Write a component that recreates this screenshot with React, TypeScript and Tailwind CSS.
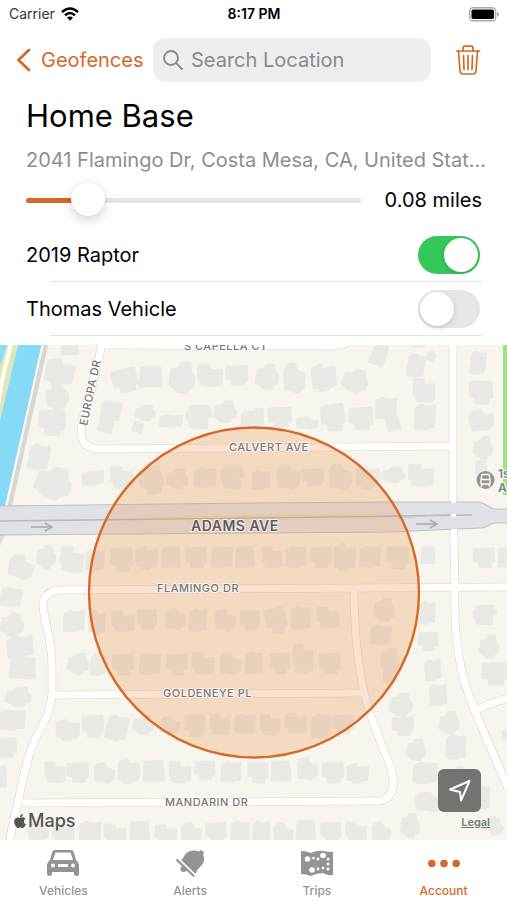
import React, { useState } from "react";
import { FaApple } from "react-icons/fa";

// Geofence detail screen: search bar, radius slider, vehicle toggles, map and tab bar

type Vehicle = {
  id: string;
  name: string;
  enabled: boolean;
};

const MOCK_VEHICLES: Vehicle[] = [
  { id: "v1", name: "2019 Raptor", enabled: true },
  { id: "v2", name: "Thomas Vehicle", enabled: false },
];

// house footprints, drawn in a 24x24 box around 0,0
const SHAPES = [
  "M-11-8L-2-11L0-6L11-7L10 8L3 9L2 11L-5 11L-6 8L-11 8Z",
  "M-11-10L-1-10L-1-4L11-5L11 9L4 11L-8 10L-8 4L-11 4Z",
  "M-9-6L-3-7L0-11L7-11L8-4L11-1L10 6L6 7L4 11L-4 10L-7 7L-11 5Z",
  "M-11-9L10-10L11 5L7 6L7 11L-5 11L-5 5L-11 4Z",
  "M-10-8L-4-11L2-9L11-10L10 9L3 9L2 11L-11 10Z",
  "M-10-5L-7-10L0-11L3-5L11-3L10 7L4 11L-3 9L-9 9Z",
  "M-10-10L9-11L11 10L-11 11Z",
];

// [x, y, width, height, shape, rotation]
const HOUSES: [number, number, number, number, number, number?][] = [
  [70, 350, 18, 11, 6], [60, 372, 29, 27, 0, 10], [57, 397, 24, 27, 2, -15], [52, 422, 27, 27, 3, 5],
  [39, 457, 21, 26, 4, 8], [53, 483, 37, 33, 2, 12],
  [125, 380, 26, 25, 3, -12], [151, 377, 24, 21, 6, 3], [182, 378, 27, 32, 2], [210, 375, 25, 24, 1], [237, 375, 23, 21, 3],
  [267, 377, 24, 26, 2], [294, 378, 23, 31, 5], [324, 377, 25, 28, 0, -8], [355, 381, 27, 24, 2, 12],
  [379, 355, 16, 22, 6, 22], [416, 366, 18, 24, 4, 8], [431, 356, 10, 11, 2], [417, 345, 12, 5, 6], [424, 390, 22, 25, 1], [425, 417, 22, 26, 4],
  [111, 411, 21, 22, 4, 8], [106, 427, 15, 12, 6, 18], [145, 413, 22, 16, 2], [138, 427, 11, 11, 6, 20], [171, 421, 24, 13, 4],
  [199, 417, 24, 27, 0, 90], [225, 412, 24, 22, 2], [248, 418, 14, 15, 4], [259, 417, 10, 18, 6], [280, 417, 24, 22, 3],
  [307, 423, 24, 13, 5], [333, 417, 24, 28, 3, -5], [361, 418, 25, 24, 3], [386, 408, 22, 22, 4], [393, 423, 14, 16, 6, -12],
  [478, 363, 16, 24, 4, 6], [481, 392, 24, 25, 3, 2], [481, 420, 26, 23, 5, -10], [483, 448, 20, 23, 2], [481, 467, 12, 14, 6],
  [93, 478, 23, 15, 4, -6], [122, 477, 23, 24, 1], [151, 480, 24, 29, 3, -12], [177, 479, 23, 20, 2], [205, 478, 23, 20, 4],
  [233, 477, 25, 24, 0, 90], [261, 480, 19, 20, 4], [288, 477, 25, 26, 5], [313, 477, 23, 18, 3], [340, 477, 25, 27, 5],
  [368, 477, 24, 24, 0], [393, 475, 25, 16, 2], [421, 475, 25, 24, 1],
  [21, 567, 27, 24, 5, 12], [46, 557, 20, 24, 2], [72, 559, 24, 27, 1, 8], [95, 560, 20, 22, 4], [122, 559, 23, 25, 3],
  [147, 558, 23, 24, 0], [171, 557, 20, 22, 6, 3], [196, 557, 22, 22, 3], [222, 557, 22, 22, 4], [245, 557, 20, 22, 6],
  [272, 557, 20, 23, 1], [296, 557, 21, 22, 4], [321, 557, 22, 22, 3], [345, 557, 22, 28, 0], [370, 557, 22, 22, 4],
  [398, 557, 23, 24, 3], [428, 555, 15, 18, 6], [484, 557, 22, 21, 3], [505, 557, 14, 20, 6],
  [11, 597, 22, 20, 4, 8], [12, 625, 24, 24, 2], [20, 647, 27, 22, 4, -8], [23, 668, 27, 22, 6, 4],
  [74, 621, 22, 22, 4], [97, 622, 17, 26, 0], [123, 621, 23, 22, 1], [147, 619, 20, 22, 3], [175, 619, 22, 22, 5],
  [198, 620, 18, 24, 4], [225, 620, 22, 22, 5], [250, 620, 20, 22, 3], [276, 620, 21, 27, 3, -10], [301, 618, 21, 24, 4], [328, 617, 22, 22, 1],
  [384, 610, 22, 24, 2], [381, 635, 22, 20, 4], [390, 660, 20, 24, 2], [427, 613, 17, 23, 4], [428, 641, 20, 20, 3],
  [433, 670, 17, 22, 4, -8], [485, 615, 20, 24, 0, 90], [489, 647, 20, 24, 2], [495, 673, 26, 24, 3],
  [78, 664, 22, 22, 2], [98, 665, 16, 22, 4], [123, 664, 22, 22, 3], [150, 664, 22, 22, 4], [177, 664, 21, 22, 3],
  [203, 663, 22, 23, 1], [230, 664, 22, 22, 5], [254, 663, 18, 22, 4], [280, 663, 20, 22, 3], [303, 658, 20, 30, 1], [330, 663, 22, 22, 3],
  [18, 697, 27, 20, 2], [12, 720, 27, 21, 4], [6, 747, 22, 21, 3], [2, 777, 10, 22, 6],
  [68, 730, 24, 21, 0], [93, 726, 22, 24, 3], [117, 728, 22, 26, 4, 10], [143, 725, 22, 20, 2], [170, 725, 20, 18, 5],
  [195, 725, 21, 24, 3], [220, 724, 20, 22, 1], [245, 724, 22, 20, 4], [270, 724, 20, 22, 1], [296, 723, 22, 21, 1], [321, 726, 21, 25, 4], [343, 724, 22, 20, 3],
  [55, 772, 21, 22, 1], [78, 772, 22, 21, 3], [104, 773, 22, 21, 5], [129, 771, 22, 25, 0], [154, 771, 22, 22, 6],
  [180, 772, 22, 23, 1], [205, 770, 21, 20, 3], [231, 772, 21, 21, 4], [258, 772, 21, 22, 3], [281, 771, 21, 21, 6],
  [307, 769, 22, 23, 5], [333, 772, 22, 22, 3], [358, 773, 22, 20, 0],
  [38, 832, 22, 18, 5], [63, 832, 22, 20, 1], [90, 832, 22, 22, 4], [115, 833, 22, 20, 1], [140, 832, 20, 22, 6], [166, 833, 22, 18, 1],
  [191, 833, 22, 22, 5], [216, 832, 21, 21, 3], [240, 832, 20, 22, 4], [261, 832, 18, 22, 4], [283, 833, 21, 20, 5],
  [306, 831, 20, 23, 6], [331, 832, 21, 22, 3], [356, 832, 21, 22, 1], [381, 832, 20, 20, 5], [410, 826, 20, 25, 2],
  [391, 672, 16, 22, 4], [401, 705, 24, 24, 2], [403, 726, 22, 20, 3], [416, 750, 20, 22, 2], [425, 773, 25, 22, 4],
  [429, 802, 30, 20, 5], [438, 695, 18, 22, 4, -6], [449, 723, 21, 23, 2], [456, 747, 21, 25, 4], [462, 772, 14, 12, 5],
  [485, 798, 10, 24, 4], [495, 826, 18, 18, 5, 30], [505, 735, 6, 10, 6],
];

const ROADS = [
  "M102 340C99 372 81 415 81 430C81 442 86 448 98 449L453 446",
  "M101 345L334 346Q342 346 347 342",
  "M453 340V500L455 587C454 622 457 650 461 667C467 697 479 720 486 737L508 788",
  "M476 710Q490 703 509 698",
  "M509 587L60 590C48 591 42 597 43 608C45 622 52 640 52 667V693C51 716 40 726 32 747C20 780 21 797 13 822L9 845",
  "M354 588C354 635 358 668 366 700C373 725 381 743 388 760C398 783 393 801 377 801L22 803",
  "M53 695L364 693",
];

function MapView() {
  return (
    <svg
      viewBox="0 345 507 495"
      preserveAspectRatio="xMidYMid slice"
      className="absolute inset-0 h-full w-full"
      fontFamily='Inter, "Liberation Sans", sans-serif'
      role="img"
      aria-label="Geofence map"
    >
      <rect x="-200" y="145" width="907" height="895" fill="#f7f5ed" />

      {/* canal and path on the left, park on the right */}
      <path d="M0 345H18L0 420Z" fill="#e2e7b8" />
      <path d="M0 345H7L0 366Z" fill="#8bdcf5" />
      <path d="M11 343L1 385L-3 412" fill="none" stroke="#fff" strokeWidth="4" />
      <path d="M18 345H42L5 506H0V420Z" fill="#87daf5" />
      <path d="M46 343L9 508" fill="none" stroke="#d8d7d1" strokeWidth="5" />
      <path d="M43 343L6 508" fill="none" stroke="#fbfaf6" strokeWidth="2" />
      <path d="M0 535H5L0 546Z" fill="#dedfdc" />
      <path d="M503 345H507V495H503Z" fill="#a2e37f" />

      <g fill="#e9e9e5" stroke="#e9e9e5" strokeWidth="3.500" strokeLinejoin="round">
        {HOUSES.map(([x, y, w, h, shape, rot = 0], i) => (
          <path key={i} d={SHAPES[shape]} transform={`translate(${x} ${y}) rotate(${rot}) scale(${w / 25} ${h / 25})`} />
        ))}
      </g>

      <g fill="none" stroke="#e0dfda" strokeWidth="8.500">
        {ROADS.map((d) => <path key={d} d={d} />)}
      </g>
      <g fill="none" stroke="#fff" strokeWidth="7">
        {ROADS.map((d) => <path key={d} d={d} />)}
      </g>

      {/* Adams Ave */}
      <path
        d="M-2 506L253 503L390 502H478C487 503 488 508 494 509H510V523H494C488 524 488 528 480 528L390 532L253 533L-2 535Z"
        fill="#e0e2e8"
        stroke="#bfc1c5"
        strokeWidth="1.2"
      />
      <path d="M-2 521L253 518L400 516L472 515" fill="none" stroke="#b9b9bd" strokeWidth="1.6" />
      <path d="M150 518L253 516L376 515" fill="none" stroke="#dfdfa8" strokeWidth="1.4" />
      <path d="M398 518L450 514" fill="none" stroke="#c6c7cb" strokeWidth="1" />
      <path d="M451 500H456V503H451ZM451 514H456V517H451ZM451 529H457V533H451Z" fill="#fff" />
      <g fill="none" stroke="#a9abb0" strokeWidth="1.6">
        <path d="M31 527H51M45 523L52 527L45 531" />
        <path d="M416 524H436M430 520L437 524L430 528" />
      </g>

      <circle cx="254" cy="592.5" r="165" fill="#ef8a45" fillOpacity="0.25" stroke="#d66a26" strokeWidth="2.4" />

      <g fontSize="11" fontWeight="500" fill="#77777a" stroke="#fff" strokeOpacity="0.7" strokeWidth="2" paintOrder="stroke" letterSpacing="0.5">
        <text x="184" y="350">S CAPELLA CT</text>
        <text x="229" y="451">CALVERT AVE</text>
        <text x="157" y="592">FLAMINGO DR</text>
        <text x="163" y="697">GOLDENEYE PL</text>
        <text x="165" y="806">MANDARIN DR</text>
        <text transform="translate(87 426) rotate(-78)">EUROPA DR</text>
      </g>
      <text x="191" y="531" fontSize="14" fontWeight="600" fill="#5d5c60" stroke="#fff" strokeOpacity="0.7" strokeWidth="2" paintOrder="stroke" letterSpacing="0.5">
        ADAMS AVE
      </text>

      <circle cx="485.500" cy="480" r="9" fill="#949494" />
      <path d="M482 474.500H489L490 479V484H481V479ZM481 479.500H490M482.500 484L481 487M488.500 484L490 487" fill="none" stroke="#fff" strokeWidth="1.3" />
      <g fontSize="12" fontWeight="600" fill="#7c7c7c" stroke="#fff" strokeWidth="2" paintOrder="stroke">
        <text x="498" y="478">1s</text>
        <text x="498" y="492">A</text>
      </g>
    </svg>
  );
}

const TABS = [
  {
    name: "Vehicles",
    icon: (
      <svg viewBox="0 0 32 28" className="h-7 w-8" fill="currentColor">
        <path
          fillRule="evenodd"
          d="M8 1H24Q26 1 26.700 3L29 11Q32 13 32 16V25Q32 27 29.500 27Q27 27 27 25V23H5V25Q5 27 2.500 27Q0 27 0 25V16Q0 13 3 11L5.300 3Q6 1 8 1ZM8.500 3.500L6 11H26L23.500 3.500ZM6 14.500A2 2 0 1 0 6 18.500A2 2 0 1 0 6 14.500ZM26 14.500A2 2 0 1 0 26 18.500A2 2 0 1 0 26 14.500ZM11 15V18H21V15Z"
        />
      </svg>
    ),
  },
  {
    name: "Alerts",
    icon: (
      <svg viewBox="0 0 32 28" className="h-7 w-8" fill="currentColor">
        <path d="M7 11.500C9 9.500 10 7 12 4.500C15 1.500 20 0.500 25 2.500A2.600 2.600 0 1 1 29 5.800C31 10 30 14 27.500 16.500C25 19 23 20.500 21.500 25Z" />
        <circle cx="9.500" cy="20" r="3" />
        <path d="M4 9.500L21 26" fill="none" stroke="#fff" strokeWidth="2" />
        <path d="M2.500 10.500L20 27.300" fill="none" stroke="currentColor" strokeWidth="2.200" />
      </svg>
    ),
  },
  {
    name: "Trips",
    icon: (
      <svg viewBox="0 0 32 28" className="h-7 w-8">
        <path d="M0 2Q5 2 10 4Q16 1 22 2Q28 3 32 3V26Q27 27 22 24Q16 24 10 27Q5 25 0 25Z" fill="currentColor" />
        <g fill="#fff">
          <circle cx="6.500" cy="10" r="2.800" />
          <circle cx="22" cy="6.500" r="2.800" />
          <circle cx="11" cy="21" r="2.800" />
          <circle cx="12.500" cy="9" r="1.300" />
          <circle cx="17" cy="10" r="1.500" />
          <circle cx="27" cy="10" r="1.500" />
          <circle cx="27" cy="15" r="1.500" />
          <circle cx="27" cy="20" r="1.500" />
          <circle cx="22" cy="19" r="1.400" />
          <circle cx="17" cy="20" r="1.400" />
        </g>
      </svg>
    ),
  },
  {
    name: "Account",
    icon: (
      <svg viewBox="0 0 32 28" className="h-7 w-8" fill="currentColor">
        <circle cx="3.800" cy="14.500" r="3.800" />
        <circle cx="16" cy="14.500" r="3.800" />
        <circle cx="28.200" cy="14.500" r="3.800" />
      </svg>
    ),
  },
];

export default function App() {
  const [query, setQuery] = useState("");
  const [radius, setRadius] = useState(8);
  const [vehicles, setVehicles] = useState(MOCK_VEHICLES);
  const [tab, setTab] = useState("Account");

  const toggle = (id: string) =>
    setVehicles(vehicles.map((v) => (v.id === id ? { ...v, enabled: !v.enabled } : v)));

  return (
    <div className="flex min-h-screen flex-col bg-white font-[Inter,'Liberation_Sans',sans-serif] text-black">
      {/* Status bar */}
      <div className="grid h-7 grid-cols-3 items-center pr-2 pl-[9px] text-sm">
        <div className="flex items-center gap-1.5 text-[#333]">
          Carrier
          <svg viewBox="0 0 18 14" className="h-3.5 w-[18px]" fill="none" stroke="#000" strokeWidth="2.400">
            <path d="M1 5.200Q9-2.200 17 5.200" />
            <path d="M4 8.300Q9 3.800 14 8.300" />
            <path d="M9 13.800L6 10.600Q9 8.400 12 10.600Z" fill="#000" stroke="none" />
          </svg>
        </div>
        <div className="text-center font-semibold">8:17 PM</div>
        <svg viewBox="0 0 30 15" className="h-[15px] w-[30px] justify-self-end">
          <rect x="0.700" y="0.700" width="26" height="13" rx="3.500" fill="#fff" stroke="#aaa" strokeWidth="1.400" />
          <rect x="2.500" y="2.500" width="22.500" height="9.500" rx="1.800" fill="#000" />
          <path d="M28 5Q30 5 30 7.200Q30 9.500 28 9.500Z" fill="#aaa" />
        </svg>
      </div>

      {/* Nav bar */}
      <div className="flex items-center pt-2.5 pr-[26px] pl-4">
        <a href="#geofences" className="flex w-[137px] shrink-0 items-center gap-2.5 text-xl text-[#d4692a]">
          <svg viewBox="0 0 15 24" className="h-6 w-[15px] shrink-0" fill="none" stroke="currentColor" strokeWidth="2.800" strokeLinecap="round" strokeLinejoin="round">
            <path d="M13 2L2.500 12L13 22" />
          </svg>
          Geofences
        </a>
        <label className="flex h-11 min-w-0 flex-1 items-center gap-2 rounded-xl bg-[#eee] px-2.5 text-[#8a8a8e]">
          <svg viewBox="0 0 20 20" className="h-5 w-5 shrink-0" fill="none" stroke="currentColor" strokeWidth="1.900" strokeLinecap="round">
            <circle cx="8" cy="8" r="7" />
            <path d="M13.200 13.200L19 19" />
          </svg>
          <input
            type="text"
            aria-label="Search Location"
            value={query}
            onChange={(e) => setQuery(e.target.value)}
            placeholder="Search Location"
            className="w-full min-w-0 bg-transparent text-xl text-black outline-none placeholder:text-[#8a8a8e]"
          />
        </label>
        <button aria-label="Delete geofence" className="ml-6 shrink-0 text-[#d4692a]">
          <svg viewBox="0 0 26 30" className="h-[30px] w-[26px]" fill="none" stroke="currentColor" strokeWidth="1.700" strokeLinecap="round" strokeLinejoin="round">
            <path d="M1.500 6H24.500" />
            <path d="M8 6V3Q8 1.200 10 1.200H16Q18 1.200 18 3V6" />
            <path d="M3.500 6L5 26Q5.200 29 8 29H18Q20.800 29 21 26L22.500 6" />
            <path d="M8.500 10.500L9 24.500M13 10.500V24.500M17.500 10.500L17 24.500" />
          </svg>
        </button>
      </div>

      <div className="pr-[25px] pl-[26px]">
        <h1 className="mt-3.5 text-[31px] leading-10">Home Base</h1>
        <p className="mt-2.5 text-xl leading-7 whitespace-nowrap text-[#8e8e8e]">
          2041 Flamingo Dr, Costa Mesa, CA, United Stat...
        </p>

        <div className="mt-[9px] flex items-center justify-between gap-6">
          <input
            type="range"
            aria-label="Radius"
            min={0}
            max={53}
            value={radius}
            onChange={(e) => setRadius(Number(e.target.value))}
            style={{ "--fill": `${(radius / 53) * 90 + 5}%` } as React.CSSProperties}
            className="h-[34px] min-w-0 flex-1 appearance-none bg-transparent [&::-webkit-slider-runnable-track]:h-[5px] [&::-webkit-slider-runnable-track]:rounded-full [&::-webkit-slider-runnable-track]:bg-[linear-gradient(to_right,#d4692a_var(--fill),#e5e5e5_var(--fill))] [&::-webkit-slider-thumb]:-mt-4 [&::-webkit-slider-thumb]:size-[34px] [&::-webkit-slider-thumb]:appearance-none [&::-webkit-slider-thumb]:rounded-full [&::-webkit-slider-thumb]:bg-white [&::-webkit-slider-thumb]:shadow-[0_4px_12px_rgba(0,0,0,0.16),0_0_2px_rgba(0,0,0,0.1)]"
          />
          <span className="shrink-0 text-xl">{(radius / 100).toFixed(2)} miles</span>
        </div>

        <ul className="mt-[11px] mb-[9px]">
          {vehicles.map((v) => (
            <li key={v.id}>
              <label className="flex h-[53px] items-center justify-between pr-0.5 text-xl">
                {v.name}
                <input
                  type="checkbox"
                  role="switch"
                  checked={v.enabled}
                  onChange={() => toggle(v.id)}
                  className="h-[38px] w-[62px] appearance-none rounded-full bg-[#e6e6e8] p-0.5 before:block before:size-[34px] before:rounded-full before:bg-white before:shadow-[0_2px_5px_rgba(0,0,0,0.15)] checked:bg-[#35c759] checked:before:ml-6"
                />
              </label>
              <div className="ml-6 h-px bg-[#e4e4e4]" />
            </li>
          ))}
        </ul>
      </div>

      {/* Map */}
      <div className="relative flex flex-1 items-end justify-between overflow-hidden pr-3.5 pl-3">
        <MapView />
        <div className="relative mb-[7px] flex items-center text-lg leading-6 font-medium text-[#555]">
          <FaApple className="size-4" />
          Maps
        </div>
        <div className="relative mb-2.5 flex flex-col items-end">
          <button aria-label="Center on my location" className="mr-3 flex size-[43px] items-center justify-center rounded-md bg-[#74736f] text-white">
            <svg viewBox="0 0 24 24" className="size-6" fill="none" stroke="currentColor" strokeWidth="2" strokeLinejoin="round">
              <path d="M21.500 2L2 10.500L12 13L13 21.500Z" />
            </svg>
          </button>
          <a href="#legal" className="mt-0.5 mr-[3px] text-[11px] leading-4 font-semibold text-[#7b7b7b] underline">Legal</a>
        </div>
      </div>

      {/* Tab bar */}
      <nav className="grid h-[60px] grid-cols-4">
        {TABS.map((t) => (
          <button
            key={t.name}
            onClick={() => setTab(t.name)}
            className={`flex flex-col items-center gap-1.5 pt-[9px] text-xs leading-4 font-medium ${tab === t.name ? "text-[#d4692a]" : "text-[#949494]"}`}
          >
            {t.icon}
            {t.name}
          </button>
        ))}
      </nav>
    </div>
  );
}
